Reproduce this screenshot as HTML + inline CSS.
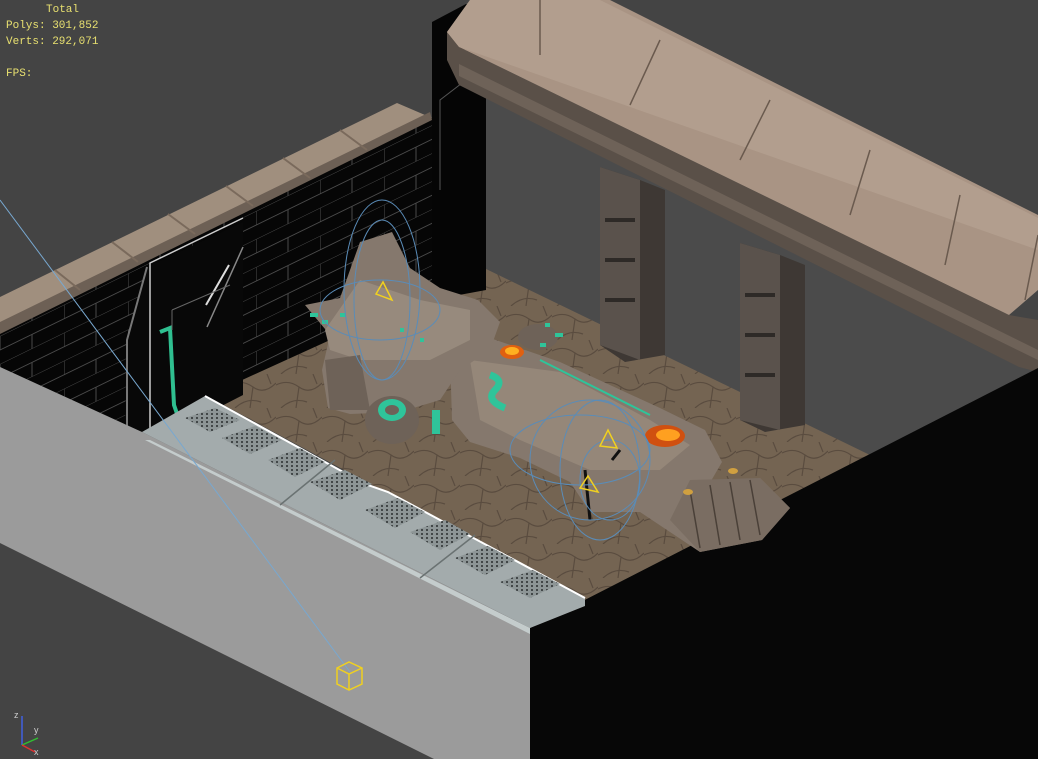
<!DOCTYPE html>
<html><head><meta charset="utf-8"><style>
html,body{margin:0;padding:0;background:#444;}
#v{position:relative;width:1038px;height:759px;overflow:hidden;background:#444;}
.t{position:absolute;left:6px;font:11px/16px "Liberation Mono",monospace;color:#e8e070;white-space:pre;}
</style></head><body><div id="v">
<svg width="1038" height="759" viewBox="0 0 1038 759" style="position:absolute;left:0;top:0">
<defs>
<pattern id="dots" width="5" height="4" patternUnits="userSpaceOnUse"><rect width="5" height="4" fill="#8d9596"/><circle cx="2" cy="2" r="1" fill="#2a2e2f"/></pattern>
<pattern id="brick" width="64" height="28" patternUnits="userSpaceOnUse" patternTransform="skewY(-26)"><rect width="64" height="28" fill="#060606"/><path d="M0 0H64M0 14H64M0 0V14M32 14V28" stroke="#4a4a4a" stroke-width="1"/></pattern>
<pattern id="floorp" width="46" height="34" patternUnits="userSpaceOnUse"><rect width="46" height="34" fill="#746452"/><path d="M0 11Q12 5 23 13T46 9M5 34Q17 23 31 28M23 13L20 34M37 0L41 10" stroke="#5a4c3f" stroke-width="1.2" fill="none"/></pattern>
</defs>
<polygon points="484,60 1038,330 1038,372 870,455 484,270" fill="#4b4b4b"/>
<polygon points="207,396 484,268 870,455 585,600" fill="url(#floorp)"/>
<polygon points="0,330 432,118 484,100 484,270 207,396 142,432 0,367" fill="url(#brick)"/>
<!-- cap -->
<polygon points="0,297 397,103 432,118 0,333" fill="#a08f7e"/>
<polygon points="0,322 430,112 432,120 0,334" fill="#6d6055"/>
<path d="M55,270L80,290M112,242L138,262M168,214L195,234M226,186L253,206M283,158L310,178M340,130L367,150" stroke="#7a6a5c" stroke-width="2"/>
<polygon points="432,22 466,4 486,10 486,290 432,300" fill="#050505"/>
<path d="M440,190L440,100L466,80L466,10" stroke="#555" fill="none"/>
<!-- door frame -->
<polygon points="125,430 127,340 147,267 243,222 243,395 175,430" fill="#080808"/>
<path d="M127,430L127,340L147,267" stroke="#777" stroke-width="2" fill="none"/>
<path d="M150,430L150,263L243,218" stroke="#ccc" stroke-width="1.5" fill="none"/>
<path d="M243,247L207,327" stroke="#888" stroke-width="1.5"/>
<path d="M160,332L170,328L174,405L182,428" stroke="#2fbf90" stroke-width="4" fill="none"/>
<path d="M206,305L229,265" stroke="#ddd" stroke-width="2"/>
<path d="M172,310L230,285M172,310L172,330" stroke="#666" fill="none"/>
<!-- beam -->
<polygon points="447,32 459,47 1009,315 1038,320 1038,372 1019,367 459,85 447,60" fill="#5a5048"/>
<polygon points="459,64 1038,350 1038,360 459,76" fill="#6e6258"/>
<polygon points="447,32 470,0 610,0 1038,215 1038,290 1009,315 459,47" fill="#a99484"/>
<polygon points="447,32 470,0 600,0 1038,218 1038,250 459,47" fill="#b29e8e"/>
<path d="M540,0L540,55M660,40L630,105M770,100L740,160M870,150L850,215M960,195L945,265M1038,235L1025,300" stroke="#6a5a4e" stroke-width="1.5"/>
<polygon points="600,167 640,180 665,190 665,355 625,362 600,345" fill="#3e3834"/>
<polygon points="600,167 640,180 640,360 600,345" fill="#5a524c"/>
<polygon points="740,243 780,255 805,265 805,425 765,432 740,420" fill="#3e3834"/>
<polygon points="740,243 780,255 780,430 740,420" fill="#5a524c"/>
<path d="M605,220h30M605,260h30M605,300h30M745,295h30M745,335h30M745,375h30" stroke="#2e2a27" stroke-width="4"/>
<polygon points="530,628 1038,368 1038,759 530,759" fill="#070707"/>
<polygon points="0,367 142,432 530,628 530,759 434,759 0,543" fill="#9b9b9b"/>
<polygon points="142,432 205,396 365,484 388,492 585,598 585,606 530,628" fill="#a3abac"/>
<polygon points="150,440 530,628 530,634 145,440" fill="#c4cccc"/>
<path d="M205,396L365,484L388,492L585,598" stroke="#fff" stroke-width="2" fill="none"/>
<polygon points="185,418 215,408 240,420 210,432" fill="url(#dots)"/>
<polygon points="222,438 255,426 282,440 250,454" fill="url(#dots)"/>
<polygon points="268,460 300,448 325,462 295,477" fill="url(#dots)"/>
<polygon points="310,482 345,470 372,484 340,500" fill="url(#dots)"/>
<polygon points="365,510 398,498 425,512 395,528" fill="url(#dots)"/>
<polygon points="410,532 445,520 470,534 440,550" fill="url(#dots)"/>
<polygon points="455,558 488,546 515,560 485,575" fill="url(#dots)"/>
<polygon points="500,582 533,570 560,584 530,598" fill="url(#dots)"/>
<path d="M280,505L335,460M420,578L475,535" stroke="#6a7272" stroke-width="1.5"/>
<!-- statue -->
<polygon points="450,355 490,338 560,362 660,408 705,430 722,462 700,500 760,478 790,508 762,540 700,552 640,512 590,512 570,482 520,458 470,442 452,420" fill="#85786d"/>
<polygon points="470,360 560,372 650,420 690,445 660,470 590,470 520,440 480,420" fill="#958779"/>
<polygon points="690,480 760,478 790,508 762,540 700,552 670,520" fill="#7a6d62"/>
<path d="M690,490L700,548M710,485L720,545M730,482L740,540M750,480L760,535" stroke="#4a4038" stroke-width="1.5"/>
<polygon points="305,305 340,298 360,242 392,232 410,268 440,288 478,300 500,322 490,350 460,370 440,400 400,412 350,414 328,408 322,370 330,335" fill="#85786d"/>
<polygon points="325,330 360,280 420,300 470,310 470,340 430,360 360,360 330,350" fill="#978a7d"/>
<polygon points="325,360 360,355 370,410 330,410" fill="#6e6258"/>
<ellipse cx="392" cy="420" rx="27" ry="24" fill="#6e6258"/>
<ellipse cx="392" cy="410" rx="14" ry="11" fill="#2fc49a"/>
<ellipse cx="392" cy="410" rx="7" ry="5" fill="#6e6258"/>
<ellipse cx="538" cy="337" rx="20" ry="13" fill="#6e6258"/>
<path d="M310,315h8M322,322h6M340,315h6M400,330h4M420,340h4M555,335h8M540,345h6M545,325h5" stroke="#2fc49a" stroke-width="4"/>
<path d="M490,375Q505,380 495,390Q485,400 505,408" stroke="#2fc49a" stroke-width="7" fill="none"/>
<path d="M540,360L650,415" stroke="#2fc49a" stroke-width="2"/>
<rect x="432" y="410" width="8" height="24" fill="#2fc49a"/>
<ellipse cx="512" cy="352" rx="12" ry="7" fill="#e06010"/>
<ellipse cx="512" cy="351" rx="7" ry="4" fill="#ffb020"/>
<ellipse cx="665" cy="436" rx="20" ry="11" fill="#d05010"/>
<ellipse cx="668" cy="435" rx="12" ry="6" fill="#ffa020"/>
<ellipse cx="733" cy="471" rx="5" ry="3" fill="#d0a040"/>
<ellipse cx="688" cy="492" rx="5" ry="3" fill="#d0a040"/>
<path d="M585,470L590,520M620,450L612,460" stroke="#111" stroke-width="3"/>
<g stroke="#5a8cb8" stroke-width="1" fill="none">
<ellipse cx="382" cy="290" rx="38" ry="90"/>
<ellipse cx="382" cy="300" rx="28" ry="80"/>
<ellipse cx="380" cy="310" rx="60" ry="30"/>
<ellipse cx="590" cy="460" rx="60" ry="60"/>
<ellipse cx="600" cy="470" rx="40" ry="70"/>
<ellipse cx="580" cy="450" rx="70" ry="35"/>
<ellipse cx="610" cy="480" rx="30" ry="40"/>
<path d="M0,200L350,672" stroke="#78a8d0"/>
</g>
<g stroke="#f0d020" stroke-width="1.5" fill="none">
<path d="M376,294L383,282L392,300Z M376,294L392,300"/>
<path d="M600,446L608,430L617,448Z"/>
<path d="M580,488L588,476L598,492Z"/>
<path d="M337,668L349,662L362,668L362,684L349,690L337,684Z M337,668L349,674L362,668M349,674V690"/>
</g>
<path d="M22,745V716" stroke="#4060e0" stroke-width="1.5"/>
<path d="M22,745L38,738" stroke="#30c030" stroke-width="1.5"/>
<path d="M22,745L35,752" stroke="#e03030" stroke-width="1.5"/>
<text x="34" y="733" font-family="Liberation Sans" font-size="9" fill="#ccc">y</text>
<text x="34" y="755" font-family="Liberation Sans" font-size="9" fill="#ccc">x</text>
<text x="14" y="718" font-family="Liberation Sans" font-size="9" fill="#ccc">z</text>
</svg>
<div class="t" style="top:2px;left:46px">Total</div>
<div class="t" style="top:18px">Polys: 301,852</div>
<div class="t" style="top:34px">Verts: 292,071</div>
<div class="t" style="top:66px">FPS:</div>
</div></body></html>
